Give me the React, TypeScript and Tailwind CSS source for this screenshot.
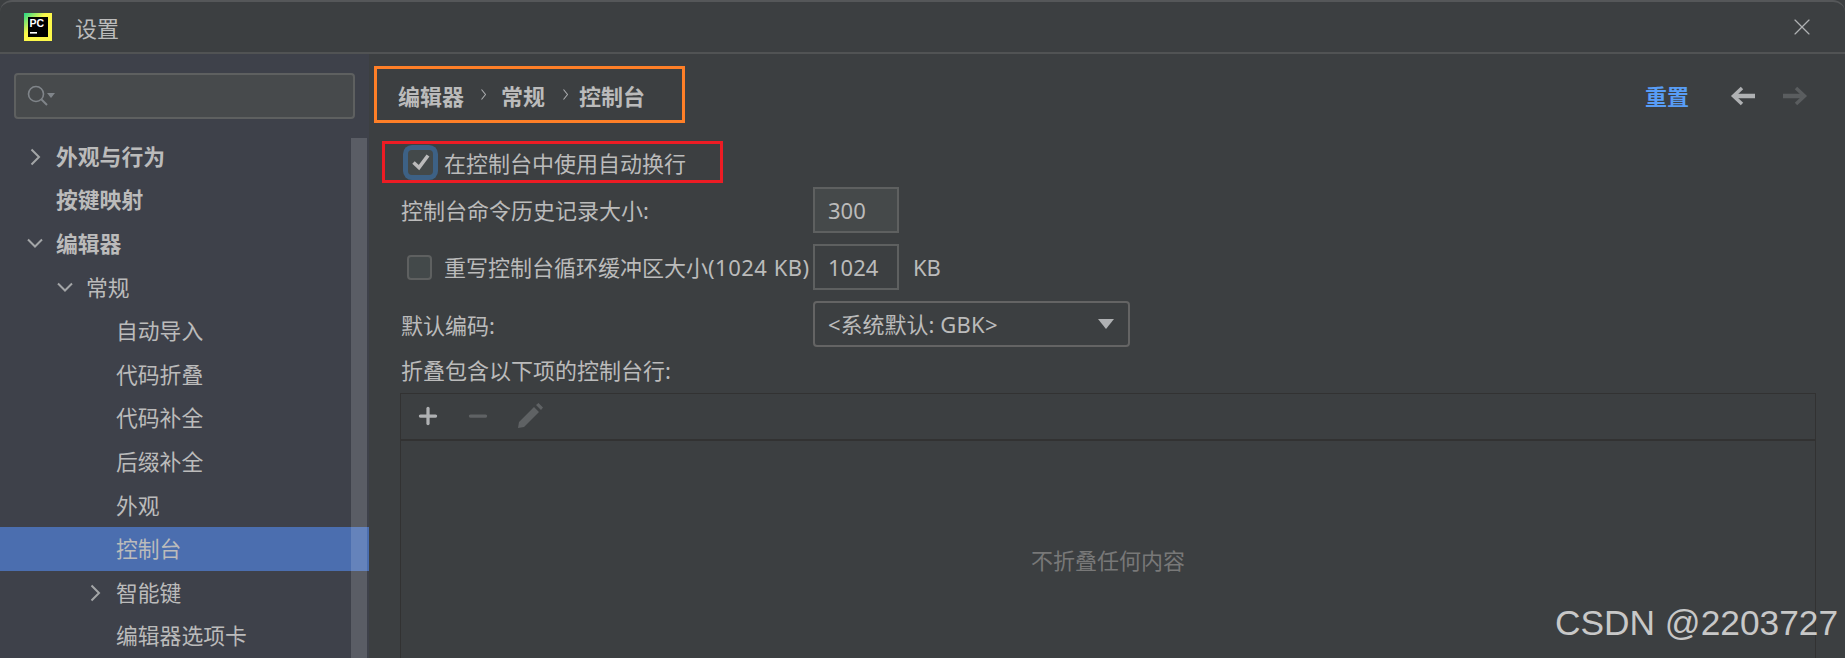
import { Minus, Plus, X } from "lucide-react";

const FONT = "font-['Noto_Sans','Noto_Sans_CJK_SC',sans-serif]";

type Row = { label: string; indent: "l0" | "l1" | "l2"; arrow?: "right" | "down"; bold?: boolean; active?: boolean };

const ROWS: Row[] = [
  { label: "外观与行为", indent: "l0", arrow: "right", bold: true },
  { label: "按键映射", indent: "l0", bold: true },
  { label: "编辑器", indent: "l0", arrow: "down", bold: true },
  { label: "常规", indent: "l1", arrow: "down" },
  { label: "自动导入", indent: "l2" },
  { label: "代码折叠", indent: "l2" },
  { label: "代码补全", indent: "l2" },
  { label: "后缀补全", indent: "l2" },
  { label: "外观", indent: "l2" },
  { label: "控制台", indent: "l2", active: true },
  { label: "智能键", indent: "l2", arrow: "right" },
  { label: "编辑器选项卡", indent: "l2" },
];

function TreeRow({ row }: { row: Row }) {
  const pad = row.indent === "l0" ? "pl-[21px]" : row.indent === "l1" ? "pl-[51px]" : "pl-[81px]";
  return (
    <div className={`flex h-[43.6px] shrink-0 items-center ${pad} ${row.active ? "bg-[#4b6eaf]" : ""}`}>
      <span className="flex w-[35px] shrink-0 items-center justify-center pr-[7px]">
        {row.arrow === "right" && (
          <svg viewBox="0 0 11 18" className="h-[18px] w-[11px]">
            <path d="M1.5 1.5 L9 9 L1.5 16.5" fill="none" stroke="#a3a5a7" strokeWidth="2" />
          </svg>
        )}
        {row.arrow === "down" && (
          <svg viewBox="0 0 18 11" className="h-[11px] w-[18px]">
            <path d="M2 1.5 L9 8.5 L16 1.5" fill="none" stroke="#a3a5a7" strokeWidth="2" />
          </svg>
        )}
      </span>
      <span className={`text-[21.8px] leading-none text-[#bbbbbb] ${row.bold ? "font-bold" : ""}`}>{row.label}</span>
    </div>
  );
}

function Crumb({ margin }: { margin: string }) {
  return (
    <svg viewBox="0 0 5 11" className={`-mt-[4px] h-[11px] w-[5px] shrink-0 ${margin}`}>
      <path d="M0.5 0.5 L4.5 5.5 L0.5 10.5" fill="none" stroke="#a9abad" strokeWidth="1.1" />
    </svg>
  );
}

function Checkbox({ checked }: { checked?: boolean }) {
  return (
    <span className={`flex h-[25px] w-[25px] shrink-0 items-center justify-center rounded-[4px] bg-[#43494a] ${checked ? "border-0 ring-[5px] ring-[#3d6185]" : "border-2 border-[#5e6060]"}`}>
      {checked && (
        <svg viewBox="0 0 20 20" className="h-[20px] w-[20px]">
          <path d="M2.5 10.5 L8 15.5 L17 3.5" fill="none" stroke="#bbbbbb" strokeWidth="3.6" />
        </svg>
      )}
    </span>
  );
}

function Field({ value, filled }: { value: string; filled?: boolean }) {
  return (
    <div className={`flex h-full w-[86px] items-center border-2 border-[#5e6060] pl-[13px] text-[22px] text-[#bbbbbb] ${filled ? "bg-[#45494a]" : ""}`}>
      {value}
    </div>
  );
}

function NavArrow({ color, flip }: { color: string; flip?: boolean }) {
  return (
    <svg viewBox="0 0 25 20" className={`h-[20px] w-[25px] ${flip ? "-scale-x-100" : ""}`}>
      <path d="M25 10 H5" fill="none" stroke={color} strokeWidth="4.5" />
      <path d="M12 2 L3.5 10 L12 18" fill="none" stroke={color} strokeWidth="3.5" />
    </svg>
  );
}

export default function App() {
  return (
    <div className={`flex h-[658px] w-[1845px] flex-col overflow-hidden bg-[#3c3f41] ${FONT}`}>
      {/* title bar */}
      <header className="flex h-[54px] shrink-0 items-center rounded-t-[12px] border-y-2 border-t-[#555759] border-b-[#515354] pl-[24px] pr-[29px]">
        <svg viewBox="0 0 28 28" className="h-[28px] w-[28px] shrink-0">
          <defs>
            <linearGradient id="pc" x1="0" y1="0" x2="1" y2="1">
              <stop offset="0" stopColor="#21d789" />
              <stop offset="0.4" stopColor="#fcf84a" />
              <stop offset="1" stopColor="#fcf84a" />
            </linearGradient>
          </defs>
          <rect width="28" height="28" fill="url(#pc)" />
          <rect x="4" y="4" width="20" height="20" fill="#000" />
          <text x="5.5" y="14" fontSize="10.5" fontWeight="700" fill="#fff" fontFamily="Liberation Sans">PC</text>
          <rect x="6" y="19" width="7" height="1.6" fill="#fff" />
        </svg>
        <span className="ml-[23px] mt-[1px] text-[22px] leading-none text-[#bbbbbb]">设置</span>
        <X className="ml-auto h-[28px] w-[28px] text-[#afb1b3]" strokeWidth={1} />
      </header>

      <div className="flex min-h-0 flex-1">
        {/* sidebar */}
        <aside className="relative flex w-[369px] shrink-0 flex-col overflow-hidden bg-[#3e414a] pt-[19px]">
          <div className="mx-[14px] mb-[16px] flex h-[46px] w-[341px] shrink-0 items-center rounded-[4px] border-2 border-[#5e6060] bg-[#474a4c] pl-[10px]">
            <svg viewBox="0 0 32 24" className="h-[24px] w-[32px] text-[#80858a]">
              <circle cx="10" cy="10" r="7.5" fill="none" stroke="currentColor" strokeWidth="1.6" />
              <path d="M15.5 15.5 L21 21" stroke="currentColor" strokeWidth="2" />
              <path d="M21 9 H29 L25 14 Z" fill="currentColor" />
            </svg>
          </div>
          {ROWS.map((row) => (
            <TreeRow key={row.label} row={row} />
          ))}
          {/* scrollbar thumb */}
          <div className="absolute bottom-0 left-[351px] top-[84px] w-[16px] bg-white/15" />
        </aside>

        {/* content */}
        <main className="flex min-w-0 flex-1 flex-col pt-[12px] text-[22px] text-[#bbbbbb]">
          <div className="flex h-[57px] shrink-0 items-center">
            <div className="ml-[5px] flex h-full w-[311px] items-center border-[3px] border-[#ff7f27] pl-[21px] pt-[3px] text-[22px] font-bold leading-none">
              <span>编辑器</span>
              <Crumb margin="ml-[17px] mr-[15px]" />
              <span>常规</span>
              <Crumb margin="ml-[18px] mr-[11px]" />
              <span>控制台</span>
            </div>
            <span className="ml-auto mt-[2px] text-[22px] font-bold leading-none text-[#589df6]">重置</span>
            <span className="ml-[41px] mt-[3px]"><NavArrow color="#afb1b3" /></span>
            <span className="ml-[28px] mr-[37px] mt-[3px]"><NavArrow color="#5a5d5f" flip /></span>
          </div>

          <div className="ml-[13px] mt-[18px] flex h-[42px] w-[341px] shrink-0 items-center border-[3px] border-[#ed1c24] pl-[23px]">
            <Checkbox checked />
            <span className="ml-[11px] mt-[1px] whitespace-nowrap leading-none">在控制台中使用自动换行</span>
          </div>

          <div className="ml-[32px] mt-[4px] flex h-[46px] shrink-0 items-center">
            <span className="w-[412px] leading-none">控制台命令历史记录大小:</span>
            <Field value="300" filled />
          </div>

          <div className="ml-[38px] mt-[11px] flex h-[46px] shrink-0 items-center">
            <Checkbox />
            <span className="ml-[12px] w-[369px] whitespace-nowrap leading-none">
              重写控制台循环缓冲区大小<span className="tracking-[0.5px]">(1024 KB)</span>
            </span>
            <Field value="1024" />
            <span className="ml-[14px] leading-none">KB</span>
          </div>

          <div className="ml-[32px] mt-[11px] flex h-[46px] shrink-0 items-center">
            <span className="mt-[1px] w-[412px] leading-none">默认编码:</span>
            <div className="flex h-full w-[317px] items-center justify-between rounded-[4px] border-2 border-[#646464] pl-[13px] pr-[14px]">
              <span className="leading-none">&lt;系统默认: <span className="tracking-[0.3px]">GBK&gt;</span></span>
              <svg viewBox="0 0 16 10" className="h-[10px] w-[16px]">
                <path d="M0 0 H16 L8 10 Z" fill="#afb1b3" />
              </svg>
            </div>
          </div>

          <div className="ml-[32px] flex h-[46px] shrink-0 items-center leading-none">折叠包含以下项的控制台行:</div>

          <section className="ml-[31px] mr-[29px] flex min-h-0 flex-1 flex-col border border-b-0 border-[#323232]">
            <div className="flex h-[47px] shrink-0 items-center border-b-2 border-[#323232] pl-[14px]">
              <Plus className="-mt-[1px] h-[26px] w-[26px] text-[#afb1b3]" strokeWidth={3} />
              <Minus className="-mt-[1px] ml-[24px] h-[26px] w-[26px] text-[#5f6264]" strokeWidth={3} />
              <svg viewBox="0 0 28 28" className="-mt-[1px] ml-[25px] h-[28px] w-[28px]">
                <path d="M2 26 L3 20 L18 5 L23 10 L8 25 Z M20 3 L22.5 1 L27 5.5 L25 8 Z" fill="#5f6264" />
              </svg>
            </div>
            <div className="flex flex-1 items-start justify-center pt-[108px] leading-none text-[#787878]">不折叠任何内容</div>
          </section>
        </main>
      </div>

      {/* watermark */}
      <div className="absolute left-[1555px] top-[603px] whitespace-nowrap font-['Liberation_Sans',sans-serif] text-[35.3px] leading-[40px] text-[#c8c8c8]">
        CSDN @2203727
      </div>
    </div>
  );
}
